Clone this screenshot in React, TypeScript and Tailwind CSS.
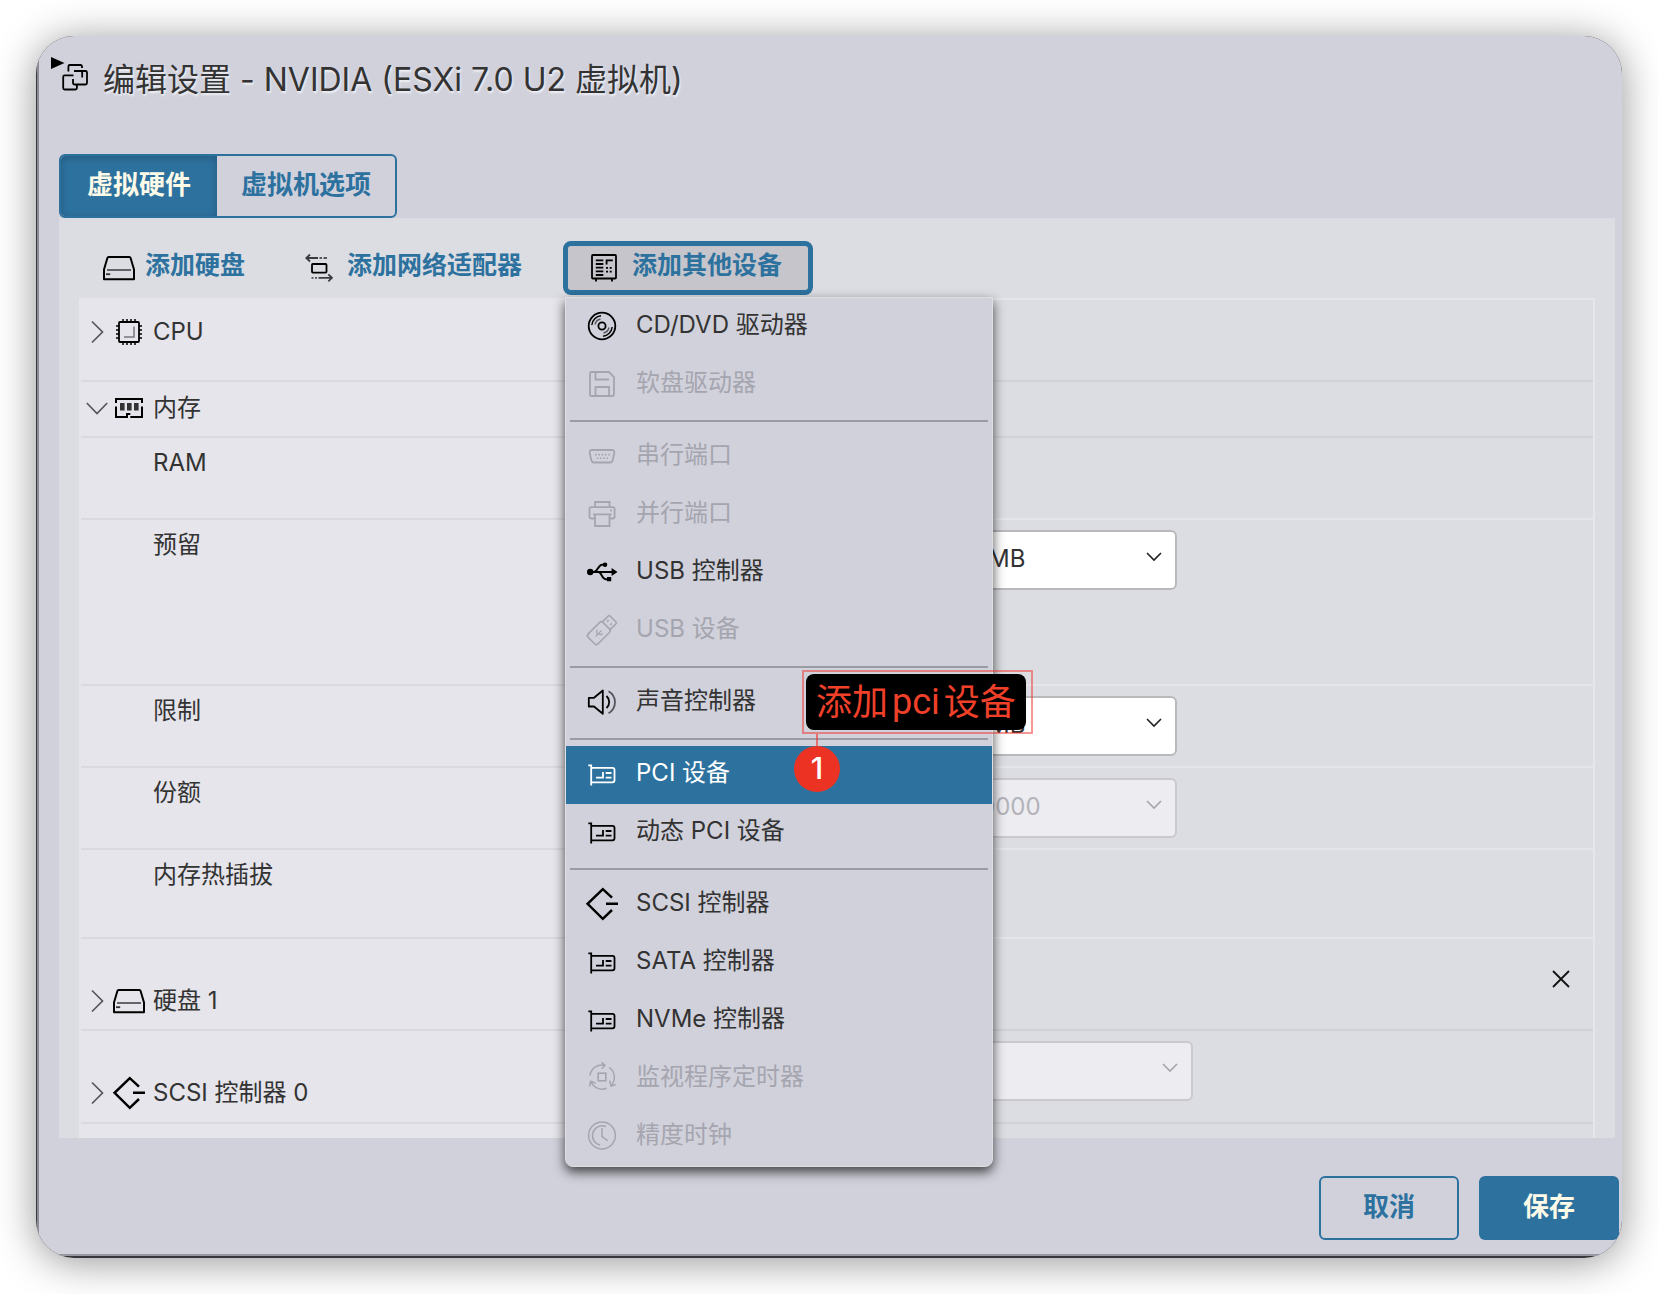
import { useState, type ReactNode } from 'react';

const FONT = "font-['Inter','Noto_Sans_CJK_SC',sans-serif]";

type IconProps = { className?: string };

function Svg({ children, className = '' }: { children: ReactNode; className?: string }) {
  return (
    <svg viewBox="0 0 32 32" width="32" height="32" fill="none" stroke="currentColor" strokeWidth="1.8" aria-hidden="true" className={`shrink-0 overflow-visible ${className}`}>
      {children}
    </svg>
  );
}

function VmIcon() {
  return (
    <svg viewBox="0 0 38 36" width="38" height="36" fill="none" stroke="#000" strokeWidth="1.8" aria-hidden="true" className="shrink-0">
      <path d="M0 1v12l13.5-6z" fill="#000" stroke="none" />
      <path d="M17.4 15.5V10.5a1.5 1.5 0 0 1 1.5-1.5H29.5a1.5 1.5 0 0 1 1.5 1.5V12" />
      <path d="M23 15H34.5a1.5 1.5 0 0 1 1.5 1.5V27a1.5 1.5 0 0 1-1.5 1.5H23.5a1.5 1.5 0 0 1-1.5-1.5V23" />
      <path d="M22.5 19.3H13.7a1.5 1.5 0 0 0-1.5 1.5V32a1.5 1.5 0 0 0 1.5 1.5H24.4a1.5 1.5 0 0 0 1.5-1.5V28" />
      <path d="M23.5 15.2H29.8a1.4 1.4 0 0 1 1.4 1.4V21.5" />
    </svg>
  );
}

function DiskIcon() {
  return (
    <Svg>
      <path d="M5.7 5H26.3Q27.3 5 27.6 6L31 17.5V27.2H1V17.5L4.4 6Q4.7 5 5.7 5z" strokeLinejoin="round" strokeWidth="2" />
      <path d="M4 18H28" stroke="#55555c" />
      <path d="M3 22.2H7.2" stroke="#333" />
    </Svg>
  );
}

function NetworkIcon() {
  return (
    <svg viewBox="0 0 28 28" width="28" height="28" fill="none" stroke="#000" strokeWidth="1.8" aria-hidden="true" className="shrink-0">
      <path d="M1 4H13M5 0.5L1.3 4L5 7.5" stroke="#3c3c40" />
      <path d="M14.5 4H17M18.5 4H22" stroke="#55555c" />
      <rect x="7" y="10" width="14.5" height="8.6" rx="0.8" />
      <path d="M6.5 23.8H8.5M10 23.8H12" stroke="#55555c" />
      <path d="M13.5 23.8H27M23.3 20.3L27 23.8L23.3 27.3" stroke="#3c3c40" />
    </svg>
  );
}

function OtherDeviceIcon() {
  return (
    <svg viewBox="0 0 26 28" width="26" height="28" fill="none" stroke="#000" strokeWidth="1.8" aria-hidden="true" className="shrink-0">
      <rect x="1" y="1" width="24" height="23.5" rx="1" />
      <path d="M5 24.5V27.5M21 24.5V27.5M4.8 6.3H12.3M4.8 10H12.3M4.8 13.7H12.3M4.8 17.4H12.3M4.8 21H12.3" />
      <path d="M15.6 10.5V6.3H21.8M15 13.8H17M18.7 13.8H20.7M15 17.6H17M18.7 17.6H20.7" />
    </svg>
  );
}

function CpuIcon() {
  return (
    <Svg>
      <rect x="6" y="6" width="20" height="20" rx="1" />
      <path d="M10 3V6M14 3V6M18 3V6M22 3V6M10 26V29M14 26V29M18 26V29M22 26V29M3 10H6M3 14H6M3 18H6M3 22H6M26 10H29M26 14H29M26 18H29M26 22H29" strokeWidth="1.5" />
      <path d="M11 21H21V10.5" stroke="#77777d" strokeWidth="1.5" />
    </Svg>
  );
}

function MemoryIcon() {
  return (
    <Svg>
      <path d="M3 11V7H29V11M3 14.5V25H14V22H17.3M17.3 25H29V14.5" strokeWidth="2" />
      <path d="M7 11H11.6V18.5H7zM14 11H18.6V18.5H14zM21 11H25.6V18.5H21z" fill="#333" stroke="none" />
    </Svg>
  );
}

function ScsiIcon() {
  return (
    <Svg>
      <path d="M26 9.6L16.8 1.2L1.6 15.8L16.8 30.8L26 22M20 15.8H32" strokeWidth="2.5" />
    </Svg>
  );
}

function CdIcon() {
  return (
    <Svg>
      <circle cx="16" cy="16" r="13.3" />
      <circle cx="16" cy="16" r="3.6" />
      <path d="M5.8 15A10.3 10.3 0 0 1 15 5.8M26.2 17A10.3 10.3 0 0 1 17 26.2" strokeWidth="1.5" />
      <path d="M9 14.5A7.2 7.2 0 0 1 14.5 9M23 17.5A7.2 7.2 0 0 1 17.5 23" strokeWidth="1.3" stroke="#55555c" />
    </Svg>
  );
}

function FloppyIcon() {
  return (
    <Svg>
      <path d="M5.5 4H23L28 9V26.5A1.5 1.5 0 0 1 26.5 28H5.5A1.5 1.5 0 0 1 4 26.5V5.5A1.5 1.5 0 0 1 5.5 4z" />
      <path d="M9.5 4V11.5H23M9.5 28V19H23V28" />
    </Svg>
  );
}

function SerialIcon() {
  return (
    <Svg>
      <path d="M6 10H26Q28.8 10 28.3 13L26.6 20.5Q26.1 22.5 24 22.5H8Q5.9 22.5 5.4 20.5L3.7 13Q3.2 10 6 10z" />
      <path d="M9 14.6H24" strokeDasharray="1.6 1.7" strokeWidth="1.6" />
      <path d="M10.7 18.2H22" strokeDasharray="1.6 1.7" strokeWidth="1.6" />
    </Svg>
  );
}

function PrinterIcon() {
  return (
    <Svg>
      <path d="M9 9V4H23.5V9M8.5 20.5H5A1.5 1.5 0 0 1 3.5 19V11A1.8 1.8 0 0 1 5.3 9.2H26.8A1.8 1.8 0 0 1 28.6 11V19A1.5 1.5 0 0 1 27 20.5H24M7 16.3H25.5M9 16.3V28H23.5V16.3M24 12.5H25.8" />
    </Svg>
  );
}

function UsbIcon() {
  return (
    <Svg>
      <path d="M4 16H27M8 16C11.5 16 12.5 8.7 16 8.7H19M12.5 16C15.5 16 16 23.2 19.5 23.2H22" strokeWidth="2" />
      <circle cx="4.2" cy="16" r="3.2" fill="currentColor" stroke="none" />
      <circle cx="19" cy="8.7" r="2.3" fill="currentColor" stroke="none" />
      <path d="M21 21H25.2V25.2H21zM25.6 12V20L31.5 16z" fill="currentColor" stroke="none" />
    </Svg>
  );
}

function UsbStickIcon() {
  return (
    <Svg>
      <g transform="translate(16 16) rotate(-45)" strokeWidth="1.6">
        <rect x="-15" y="-7" width="21" height="14" rx="2.5" />
        <path d="M6 -5.5H14A1.6 1.6 0 0 1 15.6 -3.9V3.9A1.6 1.6 0 0 1 14 5.5H6" />
        <path d="M9.5 -2.3H11.7M9.5 2.3H11.7" />
        <path d="M-9 0H-0.5M-7 0L-4.5 -3H-3M-5.5 0L-3.5 3H-2" strokeWidth="1.2" />
      </g>
    </Svg>
  );
}

function SoundIcon() {
  return (
    <Svg>
      <path d="M2.8 11.8H8L16.8 4.5V27.8L8 20.5H2.8z" strokeLinejoin="round" />
      <path d="M20.5 10A8 8 0 0 1 20.5 22" />
      <path d="M22.5 5.2A12.6 12.6 0 0 1 22.5 27.2" stroke="#55555c" />
    </Svg>
  );
}

function PciIcon() {
  return (
    <Svg>
      <path d="M2.3 7.3H5.2V27.5M5.2 9.8H26.5A2 2 0 0 1 28.5 11.8V22.3A2 2 0 0 1 26.5 24.3H5.2" />
      <path d="M10 19.6H17V14M19.7 15H25.5M19.7 19.6H25.5" />
    </Svg>
  );
}

function WatchdogIcon() {
  return (
    <Svg>
      <rect x="12.2" y="11.2" width="7.6" height="7.6" strokeWidth="1.6" />
      <path d="M4 13.5A12.2 12.2 0 0 1 18.5 3.2M15.5 0.2L19 3.4L15.8 6.8M23.3 5.5A12.2 12.2 0 0 1 25.2 23.6M23.7 18.8L25 24L30 22.6M20.5 26.3A12.2 12.2 0 0 1 4.8 19.5M3.5 24.5L4.6 19.3L9.6 21.3" strokeWidth="1.5" />
    </Svg>
  );
}

function ClockIcon() {
  return (
    <Svg>
      <circle cx="16" cy="15.5" r="13.4" strokeWidth="1.5" />
      <path d="M20 6.5A9.8 9.8 0 1 0 14 25.1M16 8V16.5L21.7 20.6" strokeWidth="1.5" />
    </Svg>
  );
}

function ChevronRight() {
  return (
    <svg viewBox="0 0 24 24" width="24" height="24" fill="none" stroke="#55555a" strokeWidth="1.7" aria-hidden="true">
      <path d="M7 1.5L17.5 12L7 22.5" />
    </svg>
  );
}

function ChevronDown({ className = '' }: IconProps) {
  return (
    <svg viewBox="0 0 24 24" width="24" height="24" fill="none" stroke="currentColor" strokeWidth="1.7" aria-hidden="true" className={className}>
      <path d="M1.8 7L12 17.5L22.2 7" />
    </svg>
  );
}

type SelectProps = { label: string; options: string[]; disabled?: boolean; wide?: boolean };

function Select({ label, options, disabled, wide }: SelectProps) {
  return (
    <div className={`relative ml-[403px] ${wide ? 'w-[221px]' : 'w-[205px]'}`}>
      <select
        aria-label={label}
        disabled={disabled}
        className="h-15 w-full appearance-none rounded-md border-2 border-[#b9b9bc] bg-white pb-0.5 pl-3.5 text-2xl text-[#333] disabled:border-[#c9c9ce] disabled:bg-[#edecf1] disabled:pl-1.5 disabled:text-[#b3b3b8] disabled:opacity-100"
      >
        {options.map((o) => (
          <option key={o}>{o}</option>
        ))}
      </select>
      <svg viewBox="0 0 16 10" width="16" height="10" fill="none" stroke={disabled ? '#a5a5aa' : '#222'} strokeWidth="1.6" aria-hidden="true" className="pointer-events-none absolute top-[22px] right-[15px]">
        <path d="M1 1L8 8L15 1" />
      </svg>
    </div>
  );
}

type RowProps = { height: string; children: ReactNode; right?: ReactNode; sub?: boolean };

function Row({ height, children, right, sub }: RowProps) {
  return (
    <div className={`flex ${height}`}>
      <div className="w-[488px] shrink-0 border-b-2 border-[#d9d9df] bg-[#e5e5eb]">{children}</div>
      <div className={`min-w-0 flex-1 border-b-2 ${sub ? 'border-[#e5e5ea]' : 'border-[#d1d2d8]'}`}>{right}</div>
    </div>
  );
}

type GroupProps = { icon: ReactNode; label: string; open?: boolean; pad: string };

function Group({ icon, label, open, pad }: GroupProps) {
  return (
    <button type="button" aria-expanded={!!open} className={`flex items-center pl-1 ${pad}`}>
      {open ? <ChevronDown className="mr-1 text-[#55555a]" /> : <span className="mr-1"><ChevronRight /></span>}
      {icon}
      <span className="ml-2 text-2xl leading-8 text-[#333]">{label}</span>
    </button>
  );
}

function SubLabel({ children }: { children: ReactNode }) {
  return <div className="pt-[9px] pl-[72px] text-2xl leading-8 text-[#333]">{children}</div>;
}

type MenuEntry = { label: string; icon: ReactNode; disabled?: boolean };

const MENU: MenuEntry[][] = [
  [
    { label: 'CD/DVD 驱动器', icon: <CdIcon /> },
    { label: '软盘驱动器', icon: <FloppyIcon />, disabled: true },
  ],
  [
    { label: '串行端口', icon: <SerialIcon />, disabled: true },
    { label: '并行端口', icon: <PrinterIcon />, disabled: true },
    { label: 'USB 控制器', icon: <UsbIcon /> },
    { label: 'USB 设备', icon: <UsbStickIcon />, disabled: true },
  ],
  [{ label: '声音控制器', icon: <SoundIcon /> }],
  [
    { label: 'PCI 设备', icon: <PciIcon /> },
    { label: '动态 PCI 设备', icon: <PciIcon /> },
  ],
  [
    { label: 'SCSI 控制器', icon: <ScsiIcon /> },
    { label: 'SATA 控制器', icon: <PciIcon /> },
    { label: 'NVMe 控制器', icon: <PciIcon /> },
    { label: '监视程序定时器', icon: <WatchdogIcon />, disabled: true },
    { label: '精度时钟', icon: <ClockIcon />, disabled: true },
  ],
];

function DeviceMenu() {
  const [active, setActive] = useState('PCI 设备');
  return (
    <div role="menu" aria-label="添加其他设备" className="absolute top-[56px] left-[2px] z-10 w-[428px] rounded-b-lg border border-[#dedee4] bg-[#d1d1db] shadow-[0_5px_12px_rgba(0,0,0,0.7)]">
      {MENU.map((group, i) => (
        <div key={i}>
          {i > 0 && <div role="separator" className="mx-1 my-1.5 h-0.5 bg-[#9b9ba6]" />}
          {group.map((entry) => {
            const tone = entry.disabled ? 'text-[#a5a5af]' : entry.label === active ? 'bg-[#2d729f] text-white' : 'text-black';
            return (
              <button
                key={entry.label}
                type="button"
                role="menuitem"
                disabled={entry.disabled}
                onClick={() => setActive(entry.label)}
                className={`flex h-[58px] w-full items-center gap-[18px] pb-0.5 pl-5 text-left ${tone}`}
              >
                {entry.icon}
                <span className={`pb-0.5 text-2xl leading-8 ${entry.disabled || entry.label === active ? '' : 'text-[#333]'}`}>{entry.label}</span>
              </button>
            );
          })}
        </div>
      ))}
      <div className="absolute top-[372px] left-[236px]">
        <div className="border-2 border-[#f0302a]/50 p-0.5 pr-[5px]">
          <div className="flex h-14 items-center gap-1 rounded-lg bg-black px-2.5 text-4xl whitespace-nowrap text-[#f0402a]">
            <span>添加</span>
            <span className="font-['Roboto']">pci</span>
            <span>设备</span>
          </div>
        </div>
        <div className="ml-3.5 h-3 w-0.5 bg-[#f0302a]/60" />
        <div className="-ml-2 flex size-[46px] items-center justify-center rounded-full bg-[#ec3323] pb-0.5 text-3xl font-medium text-white">1</div>
      </div>
    </div>
  );
}

export default function App() {
  const [tab, setTab] = useState(0);
  return (
    <div className={`min-h-screen bg-white p-9 ${FONT}`}>
      <div className="overflow-hidden rounded-[38px] bg-[#36373b] pb-0.5 pl-px shadow-[0_4px_40px_rgba(0,0,0,0.42)]">
        <main className="border-b-2 border-l-2 border-b-[#96979f] border-l-[#8b8c94] bg-[#d1d1dc] pb-3.5">
          <header className="flex items-start gap-3.5 pt-5 pl-3">
            <VmIcon />
            <h1 className="text-[32px] leading-12 text-[#333] text-shadow-[1px_2px_2px_#f0f0f5]">编辑设置 - NVIDIA (ESXi 7.0 U2 虚拟机)</h1>
          </header>

          <div role="tablist" className="mt-[50px] ml-5 flex w-fit overflow-hidden rounded-md border-2 border-[#2d729f] text-[26px] font-bold">
            {['虚拟硬件', '虚拟机选项'].map((name, i) => (
              <button
                key={name}
                type="button"
                role="tab"
                aria-selected={tab === i}
                onClick={() => setTab(i)}
                className={`h-15 pb-0.5 ${i === 0 ? 'px-[26px]' : 'px-6'} ${tab === i ? 'bg-[#2d729f] text-[#fdfae8] shadow-[inset_0_2px_8px_rgba(0,0,0,0.2)]' : 'text-[#2d729f]'}`}
              >
                <span className="block leading-14">{name}</span>
              </button>
            ))}
          </div>

          <section className="mr-[7px] ml-5 bg-[#dcdde2] px-5">
            <div className="flex h-20 items-end pb-[3px] pl-6 text-[25px] font-bold text-[#2d729f]">
              <button type="button" className="flex h-[54px] items-center gap-2.5">
                <span className="text-black"><DiskIcon /></span>
                <span className="pb-1">添加硬盘</span>
              </button>
              <button type="button" className="ml-[60px] flex h-[54px] items-center gap-3.5">
                <NetworkIcon />
                <span className="pb-1">添加网络适配器</span>
              </button>
              <div className="relative ml-[41px]">
                <button type="button" aria-haspopup="menu" aria-expanded="true" className="flex h-[54px] w-[250px] items-center gap-[15px] rounded-lg border-5 border-[#2d729f] bg-[#c5c5cb] pl-[23px]">
                  <OtherDeviceIcon />
                  <span className="pb-1 whitespace-nowrap">添加其他设备</span>
                </button>
                <div className="font-normal">
                  <DeviceMenu />
                </div>
              </div>
            </div>

            <div className="border-x-2 border-t-2 border-[#e5e5ea]">
              <Row height="h-[82px]">
                <Group icon={<CpuIcon />} label="CPU" pad="pt-4" />
              </Row>
              <Row height="h-14">
                <Group icon={<MemoryIcon />} label="内存" open pad="pt-2.5" />
              </Row>
              <Row height="h-[82px]" sub>
                <SubLabel>RAM</SubLabel>
              </Row>
              <Row height="h-[166px]" sub right={<div className="pt-2.5"><Select label="预留单位" options={['MB', 'GB']} /></div>}>
                <SubLabel>预留</SubLabel>
              </Row>
              <Row height="h-[82px]" sub right={<div className="pt-2.5"><Select label="限制单位" options={['MB', 'GB']} /></div>}>
                <SubLabel>限制</SubLabel>
              </Row>
              <Row height="h-[82px]" sub right={<div className="pt-2.5"><Select label="份额数值" options={['0000']} disabled /></div>}>
                <SubLabel>份额</SubLabel>
              </Row>
              <Row height="h-[89px]" sub>
                <SubLabel>内存热插拔</SubLabel>
              </Row>
              <Row
                height="h-[92px]"
                right={
                  <div className="flex justify-end pt-[27px] pr-[19px]">
                    <button type="button" aria-label="移除硬盘 1" className="p-1">
                      <svg viewBox="0 0 18 18" width="18" height="18" fill="none" stroke="#111" strokeWidth="1.8" aria-hidden="true">
                        <path d="M1 1L17 17M17 1L1 17" />
                      </svg>
                    </button>
                  </div>
                }
              >
                <Group icon={<DiskIcon />} label="硬盘 1" pad="pt-[46px]" />
              </Row>
              <Row height="h-[93px]" right={<div className="pt-2.5"><Select label="SCSI 控制器 0 类型" options={['']} disabled wide /></div>}>
                <Group icon={<ScsiIcon />} label="SCSI 控制器 0" pad="pt-[46px]" />
              </Row>
              <div className="h-3.5 w-[488px] bg-[#e5e5eb]" />
            </div>
          </section>

          <footer className="mt-[38px] flex justify-end gap-5 pr-[3px] text-[26px] font-bold">
            <button type="button" className="h-16 w-[140px] rounded-md border-2 border-[#2d729f] pb-1 text-[#2d729f]">取消</button>
            <button type="button" className="h-16 w-[140px] rounded-md bg-[#2d729f] pb-1 text-[#fdfae8]">保存</button>
          </footer>
        </main>
      </div>
    </div>
  );
}
